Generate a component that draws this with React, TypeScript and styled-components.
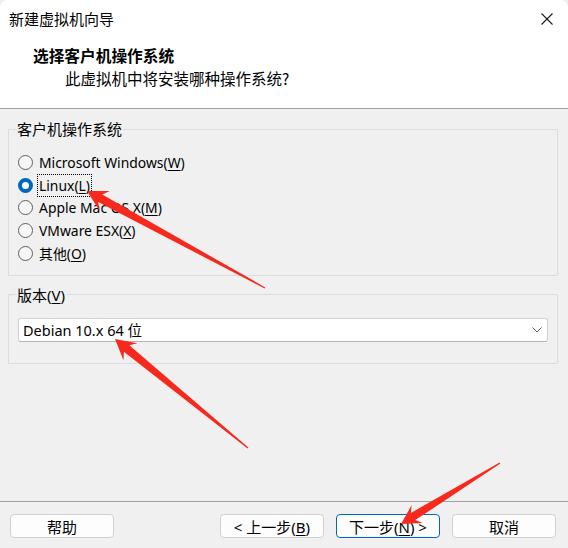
import React from 'react';
import styled, { createGlobalStyle } from 'styled-components';

const GlobalStyle = createGlobalStyle`
    html, body {
        margin: 0;
        padding: 0;
        background: #f0f0f0;
    }
    body {
        font-family: "Noto Sans", "Noto Sans CJK SC", sans-serif;
    }
`;

type Point = { x: number; y: number };

type ArrowSpec = {
    tip: Point;
    tail: Point;
    head: number;
};

const osOptions = [
    { label: 'Microsoft Windows', key: 'W' },
    { label: 'Linux', key: 'L' },
    { label: 'Apple Mac OS X', key: 'M' },
    { label: 'VMware ESX', key: 'X' },
    { label: '其他', key: 'O' },
];

// red annotation arrows drawn over the screenshot
const arrows: ArrowSpec[] = [
    { tip: { x: 87, y: 191 }, tail: { x: 265, y: 288 }, head: 20 },
    { tip: { x: 115, y: 339 }, tail: { x: 248, y: 448 }, head: 20 },
    { tip: { x: 401, y: 524 }, tail: { x: 500, y: 463 }, head: 19 },
];

function arrowPoints({ tip, tail, head }: ArrowSpec) {
    const dx = tail.x - tip.x;
    const dy = tail.y - tip.y;
    const len = Math.hypot(dx, dy);
    const ux = dx / len;
    const uy = dy / len;
    const px = -uy;
    const py = ux;
    const at = (d: number, w: number) =>
        `${(tip.x + ux * d + px * w).toFixed(1)},${(tip.y + uy * d + py * w).toFixed(1)}`;
    const headHalf = head * 0.55;
    const neck = head * 0.75;
    return [
        at(0, 0),
        at(head, headHalf),
        at(neck, 4.2),
        at(len, 0.7),
        at(len, -0.7),
        at(neck, -4.2),
        at(head, -headHalf),
    ].join(' ');
}

function App() {
    return (
        <>
            <GlobalStyle/>
            <Window>
                <Header>
                    <TitleBar>
                        <WindowTitle>新建虚拟机向导</WindowTitle>
                        <CloseButton aria-label="关闭">
                            <svg width="12" height="12" viewBox="0 0 12 12">
                                <path d="M0.5 0.5 L11.5 11.5 M11.5 0.5 L0.5 11.5" stroke="#1a1a1a" strokeWidth="1.1" fill="none"/>
                            </svg>
                        </CloseButton>
                    </TitleBar>
                    <Heading>选择客户机操作系统</Heading>
                    <Subheading>此虚拟机中将安装哪种操作系统?</Subheading>
                </Header>

                <Body>
                    <GroupBox>
                        <Legend>客户机操作系统</Legend>
                        <RadioList>
                            {osOptions.map((opt) => (
                                <RadioRow key={opt.key}>
                                    <Radio type="radio" name="os" defaultChecked={opt.key === 'L'}/>
                                    <RadioLabel $focused={opt.key === 'L'}>
                                        {opt.label}(<u>{opt.key}</u>)
                                    </RadioLabel>
                                </RadioRow>
                            ))}
                        </RadioList>
                    </GroupBox>

                    <GroupBox $tall>
                        <Legend>版本(<u>V</u>)</Legend>
                        <Select>
                            <span>Debian 10.x 64 位</span>
                            <svg width="10" height="6" viewBox="0 0 10 6">
                                <path d="M0.5 0.5 L5 5 L9.5 0.5" stroke="#5c5c5c" strokeWidth="1" fill="none"/>
                            </svg>
                        </Select>
                    </GroupBox>
                </Body>

                <Footer>
                    <Button>帮助</Button>
                    <ButtonGroup>
                        <Button>&lt; 上一步(<u>B</u>)</Button>
                        <Button $primary>下一步(<u>N</u>) &gt;</Button>
                        <Button>取消</Button>
                    </ButtonGroup>
                </Footer>

                <Annotations width="568" height="548" viewBox="0 0 568 548">
                    {arrows.map((a, i) => (
                        <polygon key={i} points={arrowPoints(a)} fill="#f7281c"/>
                    ))}
                </Annotations>
            </Window>
        </>
    );
}

// Dialog window
const Window = styled.div`
    position: relative;
    width: 568px;
    height: 548px;
    display: flex;
    flex-direction: column;
    background: #f0f0f0;
    overflow: hidden;
    font-family: "Noto Sans", "Noto Sans CJK SC", sans-serif;
    font-size: 15px;
    color: #000;
`;

// White header with title bar and wizard heading
const Header = styled.header`
    height: 108px;
    background: #fff;
    border-bottom: 1px solid #a0a0a0;
    display: flex;
    flex-direction: column;
    border-radius: 8px 8px 0 0;
`;

const TitleBar = styled.div`
    display: flex;
    justify-content: space-between;
    align-items: center;
    height: 20px;
    padding: 9px 15px 0 9px;
`;

const WindowTitle = styled.div`
    font-family: "Noto Sans CJK SC", sans-serif;
    font-size: 15px;
    line-height: 20px;
`;

const CloseButton = styled.div`
    display: flex;
    width: 12px;
    height: 12px;
`;

const Heading = styled.h1`
    margin: 17px 0 0 33px;
    font-family: "Noto Sans CJK SC", sans-serif;
    font-size: 15.7px;
    font-weight: bold;
    line-height: 20px;
`;

const Subheading = styled.p`
    margin: 2px 0 0 65px;
    font-family: "Noto Sans CJK SC", sans-serif;
    font-size: 15.5px;
    line-height: 20px;
`;

// Main area with group boxes
const Body = styled.main`
    display: flex;
    flex-direction: column;
    gap: 10px;
    padding: 11px 10px 0 8px;
    flex: 1;
`;

const GroupBox = styled.fieldset<{ $tall?: boolean }>`
    margin: 0;
    padding: ${(p) => (p.$tall ? '14px 9px 21px' : '0 9px 10px')};
    border: 1px solid #dcdcdc;
    border-radius: 1px;
    min-width: 0;
`;

const Legend = styled.legend`
    padding: 0 1px;
    margin-left: -2px;
    font-size: 15px;
    line-height: 18px;

    u {
        text-decoration-thickness: 1px;
        text-underline-offset: 2px;
    }
`;

const RadioList = styled.div`
    display: flex;
    flex-direction: column;
    padding-top: 13px;
`;

const RadioRow = styled.label`
    display: flex;
    align-items: center;
    height: 22.75px;
    gap: 4px;
`;

const Radio = styled.input`
    appearance: none;
    margin: 0;
    width: 15px;
    height: 15px;
    border-radius: 50%;
    border: 1px solid #5f5f5f;
    background: #f6f6f6;
    box-sizing: border-box;
    flex: none;

    &:checked {
        border: 4.5px solid #0067c0;
        background: #fff;
    }
`;

const RadioLabel = styled.span<{ $focused?: boolean }>`
    font-size: 13.9px;
    line-height: 21px;
    padding: 0 1px;
    border: 1px dotted ${(p) => (p.$focused ? '#000' : 'transparent')};

    u {
        text-decoration-thickness: 1px;
        text-underline-offset: 2px;
    }
`;

// Combo box showing the chosen version
const Select = styled.div`
    display: flex;
    align-items: center;
    justify-content: space-between;
    height: 24px;
    box-sizing: border-box;
    padding: 0 5px 0 4px;
    background: #fff;
    border: 1px solid #d2d2d2;
    border-bottom-color: #b4b4b4;
    border-radius: 3px;
    font-size: 14.5px;
`;

// Bottom button strip
const Footer = styled.footer`
    display: flex;
    align-items: center;
    justify-content: space-between;
    border-top: 1px solid #a0a0a0;
    padding: 12px 12px 10px 10px;
`;

const ButtonGroup = styled.div`
    display: flex;
    gap: 12px;
`;

const Button = styled.button<{ $primary?: boolean }>`
    width: 104px;
    height: 24px;
    margin: 0;
    padding: 0;
    box-sizing: border-box;
    border: 1px solid ${(p) => (p.$primary ? '#0067c0' : '#d0d0d0')};
    border-radius: 4px;
    background: #fdfdfd;
    font-family: "Noto Sans", "Noto Sans CJK SC", sans-serif;
    font-size: 15px;
    color: #000;

    u {
        text-decoration-thickness: 1px;
        text-underline-offset: 2px;
    }
`;

// Overlay with hand-drawn red arrows
const Annotations = styled.svg`
    position: absolute;
    left: 0;
    top: 0;
    pointer-events: none;
`;

export default App;
